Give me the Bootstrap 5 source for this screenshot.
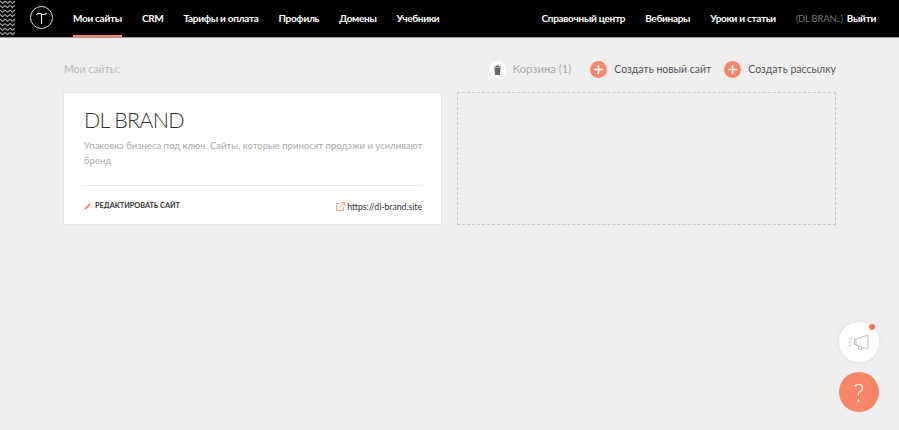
<!DOCTYPE html>
<html lang="ru">
<head>
  <meta charset="UTF-8" />
  <meta name="viewport" content="width=device-width, initial-scale=1" />
  <title>Мои сайты</title>
  <link href="https://cdn.jsdelivr.net/npm/bootstrap@5.3.2/dist/css/bootstrap.min.css" rel="stylesheet" />
  <style>
    body { background: #efefef; font-family: "Lato", "Noto Sans", sans-serif; overflow: hidden; }
    .topbar { height: 38px; background: #000; border-bottom: 1px solid #9a9a9a; padding-left: 15px; position: relative; }
    .zigzag { width: 15px; height: 37px; position: absolute; left: 0; top: 0; }
    .logo-t { width: 23px; height: 23px; margin: 6px 20px 0 15px; flex: none; }
    .top-nav { column-gap: 20px; }
    .top-link { color: #fff; font-size: 10px; letter-spacing: -.3px; font-weight: 700; text-decoration: none; line-height: 37px; height: 37px; white-space: nowrap; }
    .top-link.is-active { border-bottom: 2px solid #fa8669; }
    .top-user { color: #777; font-size: 9.5px; font-weight: 400; letter-spacing: -.25px; margin-right: 2px; }
    .right-links { padding-right: 23px; column-gap: 20px; }
    .page-area { padding: 0 63px; }
    .tool-row { height: 54px; padding-top: 23px; }
    .page-label { color: #b9b9b9; font-size: 10.5px; margin: 1px 0 0 1px; }
    .tool-link { font-size: 10.5px; color: #555; text-decoration: none; white-space: nowrap; }
    .tool-link.is-muted { color: #aaa; font-size: 11.3px; margin-right: 19px; }
    .tool-link.is-first { margin-right: 13px; }
    .plus-dot { width: 17px; height: 17px; border-radius: 50%; background: #fa8669; flex: none; margin-right: 7px; }
    .bin-dot { width: 17px; height: 17px; border-radius: 50%; background: #fff; flex: none; margin-right: 7px; }
    .site-grid { display: grid; grid-template-columns: 379px 379px; column-gap: 15px; }
    .site-tile { height: 133px; background: #fff; border: 1px solid #e6e6e6; padding: 12px 18px 0 20px; }
    .site-name { font-size: 21.5px; font-weight: 300; color: #333; letter-spacing: -.75px; line-height: 30px; margin: 0 0 3px; }
    .site-text { font-size: 9.5px; color: #aaa; line-height: 15px; margin: 0; height: 30px; }
    .site-line { border-top: 1px solid #eaeaea; margin-top: 17px; padding-top: 14px; }
    .edit-link { font-size: 7.3px; font-weight: 700; color: #333; text-decoration: none; }
    .edit-icon { margin-right: 4px; }
    .url-link { font-size: 8.7px; color: #333; text-decoration: none; padding-right: 1px; }
    .url-icon { margin-right: 2px; }
    .empty-slot { height: 133px; border: 1px dashed #c9c9c9; }
    .float-btn { position: fixed; left: 839px; width: 40px; height: 40px; border-radius: 50%; }
    .float-news { top: 322px; background: #fff; box-shadow: 0 0 4px rgba(0,0,0,.08); }
    .float-help { top: 372px; background: #fa8669; color: #fff; font-size: 25px; font-weight: 300; line-height: 40px; text-align: center; }
    .news-mark { position: absolute; left: 30px; top: 2px; width: 6px; height: 6px; border-radius: 50%; background: #f0735a; }
  </style>
</head>
<body>
  <header class="topbar d-flex align-items-start">
    <svg class="zigzag" viewBox="0 0 15 37">
      <defs>
        <pattern id="zz" width="5" height="4.5" patternUnits="userSpaceOnUse">
          <path d="M0 1 L2.5 3.2 L5 1" fill="none" stroke="#d5d5d5" stroke-width="1" />
        </pattern>
      </defs>
      <rect width="15" height="37" fill="url(#zz)" />
    </svg>
    <svg class="logo-t" viewBox="0 0 23 23">
      <circle cx="11.5" cy="11.5" r="11" fill="none" stroke="#ddd" stroke-width="1" />
      <path d="M6.5 9 C7.5 6.8 9.5 7.2 11.5 8 C13.5 8.8 15.5 9 16.5 7 M11.5 8 V18" fill="none" stroke="#eee" stroke-width="1.1" />
    </svg>
    <nav class="top-nav d-flex">
      <a class="top-link is-active" href="#">Мои сайты</a>
      <a class="top-link" href="#">CRM</a>
      <a class="top-link" href="#">Тарифы и оплата</a>
      <a class="top-link" href="#">Профиль</a>
      <a class="top-link" href="#">Домены</a>
      <a class="top-link" href="#">Учебники</a>
    </nav>
    <div class="right-links d-flex ms-auto">
      <a class="top-link" href="#">Справочный центр</a>
      <a class="top-link" href="#">Вебинары</a>
      <a class="top-link" href="#">Уроки и статьи</a>
      <span class="top-link"><span class="top-user">(DL BRAN..)</span> Выйти</span>
    </div>
  </header>

  <main class="page-area">
    <div class="tool-row d-flex justify-content-between align-items-start">
      <span class="page-label">Мои сайты:</span>
      <div class="d-flex align-items-center">
        <a class="tool-link is-muted d-flex align-items-center" href="#">
          <span class="bin-dot d-flex align-items-center justify-content-center">
            <svg width="9" height="10" viewBox="0 0 9 10"><path d="M1 1.5h7v1H1z M3 .5h3v1H3z M1.5 3h6l-.5 7H2z" fill="#666" /></svg>
          </span>
          Корзина (1)
        </a>
        <a class="tool-link is-first d-flex align-items-center" href="#">
          <span class="plus-dot d-flex align-items-center justify-content-center">
            <svg width="9" height="9" viewBox="0 0 9 9"><path d="M4.5 0v9M0 4.5h9" stroke="#fff" stroke-width="1.6" /></svg>
          </span>
          Создать новый сайт
        </a>
        <a class="tool-link d-flex align-items-center" href="#">
          <span class="plus-dot d-flex align-items-center justify-content-center">
            <svg width="9" height="9" viewBox="0 0 9 9"><path d="M4.5 0v9M0 4.5h9" stroke="#fff" stroke-width="1.6" /></svg>
          </span>
          Создать рассылку
        </a>
      </div>
    </div>

    <div class="site-grid">
      <section class="site-tile">
        <h2 class="site-name">DL BRAND</h2>
        <p class="site-text">Упаковка бизнеса под ключ. Сайты, которые приносят продажи и усиливают бренд</p>
        <div class="site-line d-flex justify-content-between align-items-center">
          <a class="edit-link d-flex align-items-center" href="#">
            <svg class="edit-icon" width="7" height="7" viewBox="0 0 8 8"><path d="M0 8 L1 5.5 L6 .5 L7.5 2 L2.5 7z" fill="#fa8669" /></svg>
            РЕДАКТИРОВАТЬ САЙТ
          </a>
          <a class="url-link d-flex align-items-center" href="#">
            <svg class="url-icon" width="9" height="9" viewBox="0 0 9 9"><path d="M4 1.5H.5v7h7V5M3.5 5.5 8.5.5M5.5.5h3v3" fill="none" stroke="#fa8669" stroke-width=".8" /></svg>
            https://dl-brand.site
          </a>
        </div>
      </section>
      <div class="empty-slot"></div>
    </div>
  </main>

  <div class="float-btn float-news d-flex align-items-center justify-content-center">
    <svg width="22" height="18" viewBox="0 0 22 18"><path d="M8 6 L20 2 V16 L8 12 Z M8 6 H6.5 V12 H8 M10.5 12.8 V16 H13.5 V13.8 M1 5 L3.5 6 M1 9 H3.5 M1 13 L3.5 12" fill="none" stroke="#bdbdbd" stroke-width="1" /></svg>
    <span class="news-mark"></span>
  </div>
  <div class="float-btn float-help">?</div>

  <script src="https://cdn.jsdelivr.net/npm/bootstrap@5.3.2/dist/js/bootstrap.bundle.min.js"></script>
</body>
</html>
